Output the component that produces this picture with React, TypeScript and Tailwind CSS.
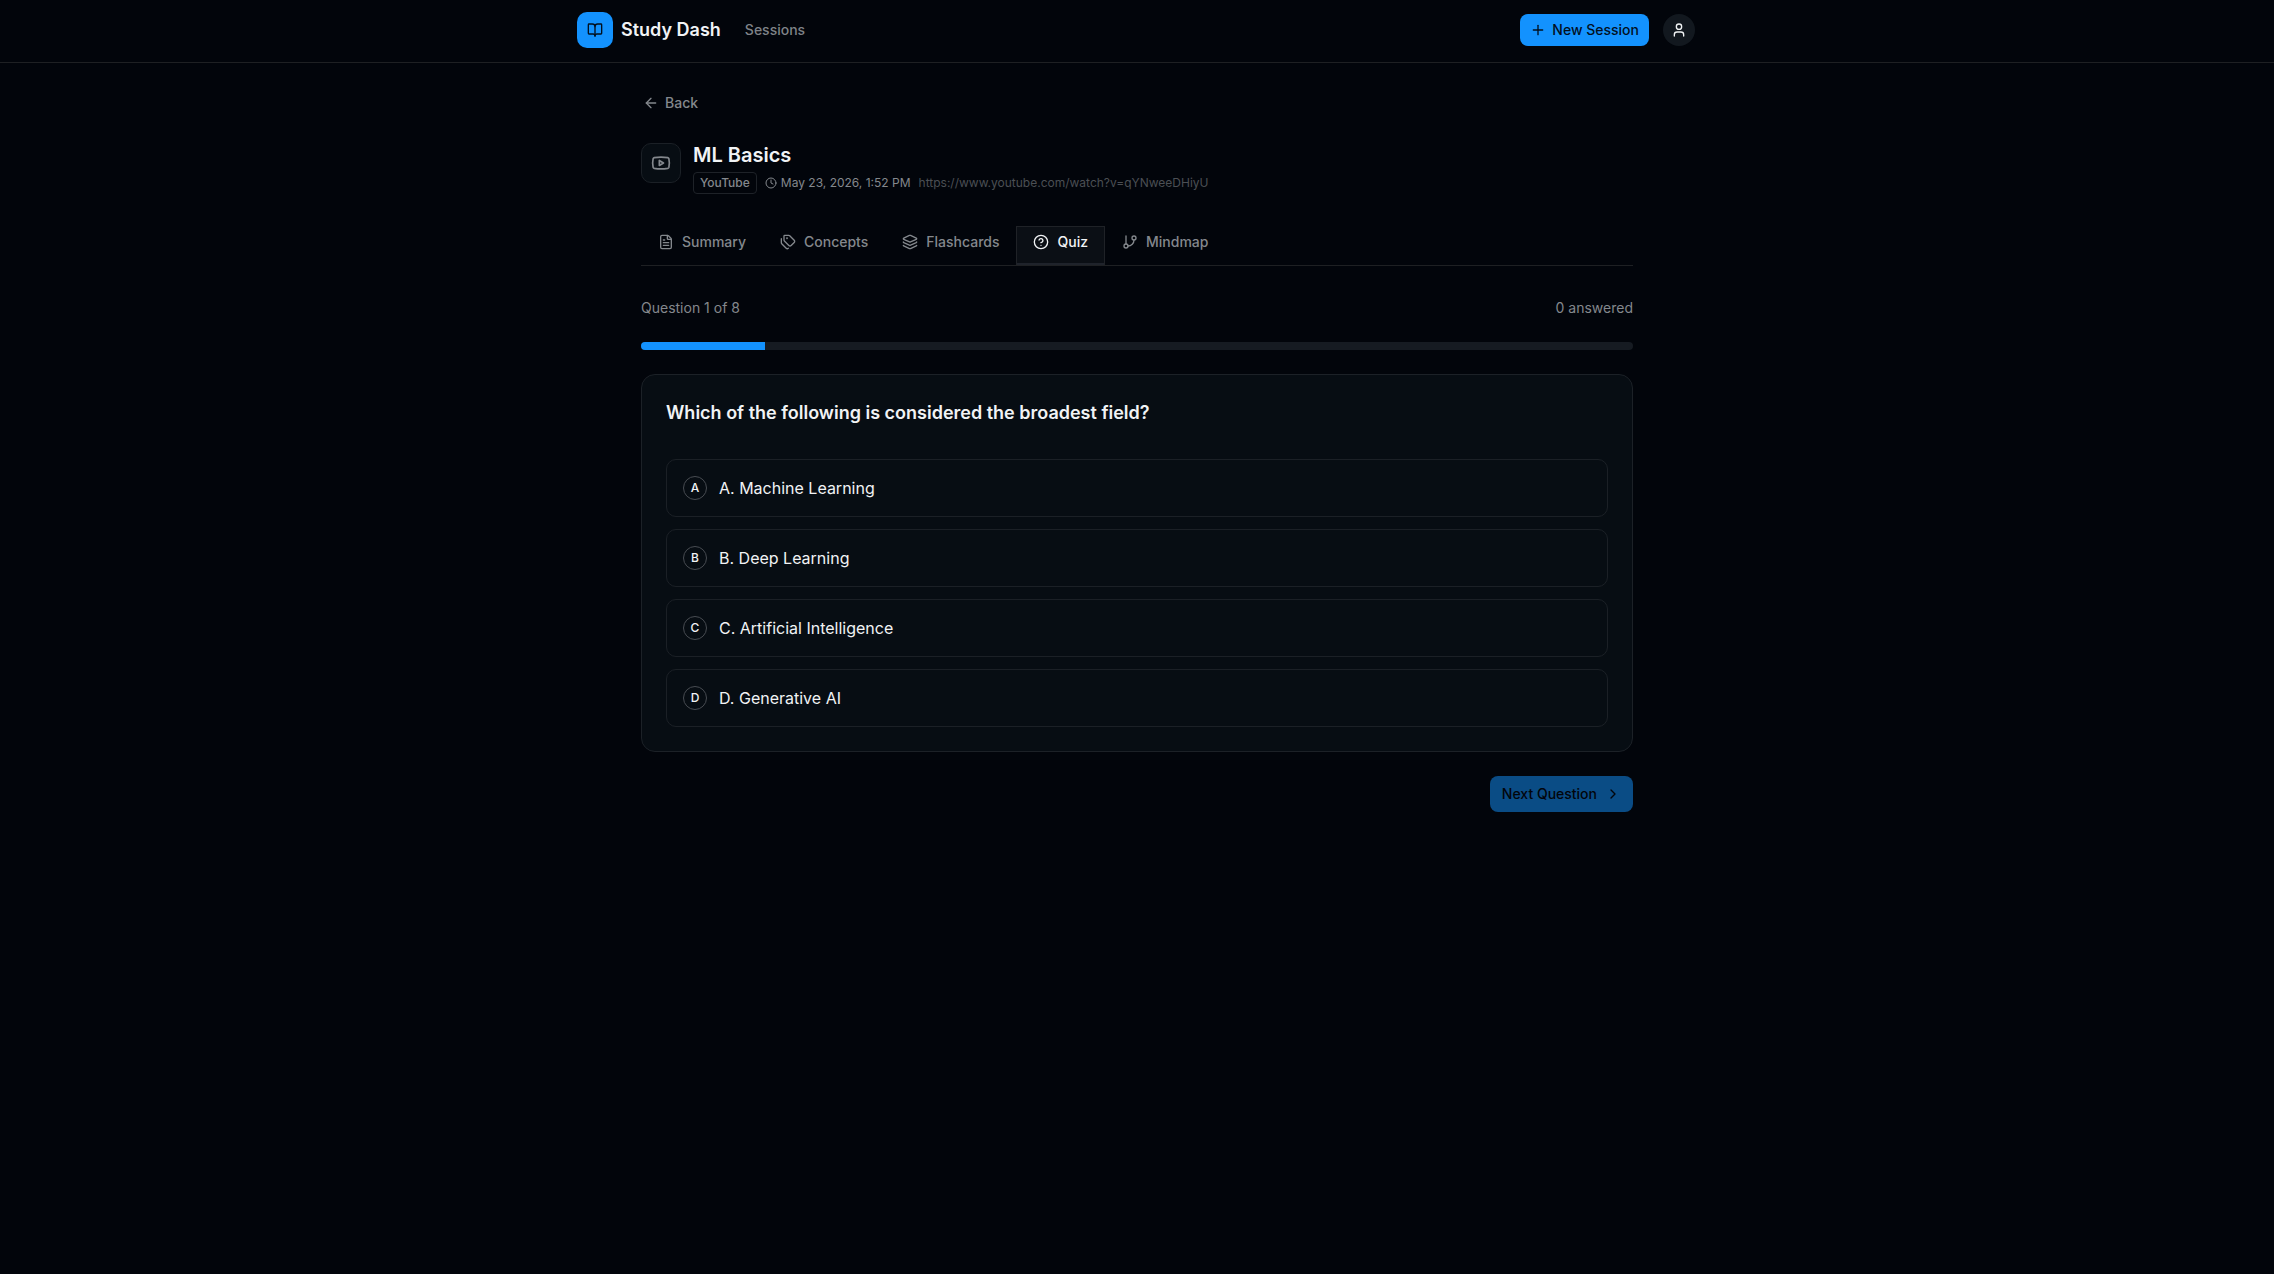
import { useState } from 'react';
import {
  ArrowLeft,
  BookOpen,
  ChevronRight,
  CircleQuestionMark,
  Clock,
  FileText,
  GitBranch,
  Layers,
  Plus,
  Tags,
  User,
  Youtube,
} from 'lucide-react';
import type { LucideIcon } from 'lucide-react';

interface ITab {
  id: string;
  label: string;
  icon: LucideIcon;
}

const tabs: ITab[] = [
  { id: 'summary', label: 'Summary', icon: FileText },
  { id: 'concepts', label: 'Concepts', icon: Tags },
  { id: 'flashcards', label: 'Flashcards', icon: Layers },
  { id: 'quiz', label: 'Quiz', icon: CircleQuestionMark },
  { id: 'mindmap', label: 'Mindmap', icon: GitBranch },
];

const options = ['Machine Learning', 'Deep Learning', 'Artificial Intelligence', 'Generative AI'];
const totalQuestions = 8;

export default function App() {
  const [tab, setTab] = useState('quiz');
  const [selected, setSelected] = useState<number | null>(null);

  return (
    <div className="min-h-screen bg-[#02050b] font-['Inter',sans-serif] text-[#f1f3f5]">
      <header className="border-b border-[#1e2023]">
        <div className="mx-auto flex max-w-6xl items-center justify-between px-4 pt-3 pb-3.5">
          <div className="flex items-center gap-6">
            <a href="#" className="flex items-center gap-2 text-lg font-semibold">
              <span className="flex size-9 items-center justify-center rounded-[10px] bg-[#1392fe] text-[#02101f]">
                <BookOpen className="size-4" />
              </span>
              Study Dash
            </a>
            <a href="#" className="text-sm font-medium text-[#7f8388]">Sessions</a>
          </div>
          <div className="flex items-center gap-3">
            <button className="flex h-8 items-center gap-1.5 rounded-lg bg-[#1392fe] px-2.5 text-sm font-medium text-[#02101f]">
              <Plus className="size-4" />
              New Session
            </button>
            <button aria-label="Account" className="flex size-9 items-center justify-center">
              <span className="flex size-8 items-center justify-center rounded-full bg-[#12181f]">
                <User className="size-4" />
              </span>
            </button>
          </div>
        </div>
      </header>

      <main className="mx-auto max-w-5xl px-4 pt-6">
        <a href="#" className="flex h-8 items-center gap-1.5 px-0.5 text-sm font-medium text-[#84888d]">
          <ArrowLeft className="size-4" />
          Back
        </a>

        <div className="mt-6 flex items-start gap-3">
          <span className="flex size-10 shrink-0 items-center justify-center rounded-[10px] border border-[#1b2026] bg-[#070d13] text-[#84888d]">
            <Youtube className="size-5" />
          </span>
          <div>
            <h1 className="text-xl leading-[25px] font-semibold">ML Basics</h1>
            <div className="mt-1 flex items-center gap-2 text-xs text-[#84888d]">
              <span className="rounded-sm border border-[#1e2228] px-1.5 py-0.5 font-medium">YouTube</span>
              <span className="flex items-center gap-1">
                <Clock className="size-3" />
                May 23, 2026, 1:52 PM
              </span>
              <a href="#" className="text-[#4b4f54]">https://www.youtube.com/watch?v=qYNweeDHiyU</a>
            </div>
          </div>
        </div>

        <nav className="mt-8 flex border-b border-[#1e2023]">
          {tabs.map(({ id, label, icon: Icon }) => (
            <button
              key={id}
              onClick={() => setTab(id)}
              className={`flex h-[39px] items-center gap-2 border-x border-t px-4 pb-2 text-sm font-medium ${
                tab === id
                  ? 'border-[#1f2227] bg-[#0b0f15] text-[#f1f3f5] shadow-[inset_0_-2px_0_#1f232b]'
                  : 'border-transparent text-[#84888d]'
              }`}
            >
              <Icon className="size-4" />
              {label}
            </button>
          ))}
        </nav>

        <div className="mt-8 flex justify-between text-sm text-[#84888d]">
          <span>Question 1 of {totalQuestions}</span>
          <span>{selected === null ? 0 : 1} answered</span>
        </div>
        <div className="mt-6 h-2 overflow-hidden rounded-full bg-[#161b22]">
          <div className="h-full bg-[#1392fe]" style={{ width: `${100 / totalQuestions}%` }} />
        </div>

        <section className="mt-6 rounded-[14px] border border-[#1c2127] bg-[#070d13] p-6">
          <h2 className="text-lg leading-7 font-semibold">Which of the following is considered the broadest field?</h2>
          <div className="mt-8 flex flex-col gap-3">
            {options.map((option, index) => {
              const letter = 'ABCD'[index];

              return (
                <button
                  key={option}
                  onClick={() => setSelected(index)}
                  className={`flex items-center gap-3 rounded-[10px] border p-4 text-left ${
                    selected === index ? 'border-[#1392fe]' : 'border-[#1b2026]'
                  }`}
                >
                  <span className="flex size-6 items-center justify-center rounded-full border border-[#484c52] text-xs font-medium">
                    {letter}
                  </span>
                  <span>{letter}. {option}</span>
                </button>
              );
            })}
          </div>
        </section>

        <div className="mt-6 flex justify-end">
          <button
            disabled={selected === null}
            className="flex h-9 items-center gap-2 rounded-lg bg-[#1392fe] px-3 text-sm font-medium text-[#02050b] disabled:opacity-50"
          >
            Next Question
            <ChevronRight className="size-4" />
          </button>
        </div>
      </main>
    </div>
  );
}
